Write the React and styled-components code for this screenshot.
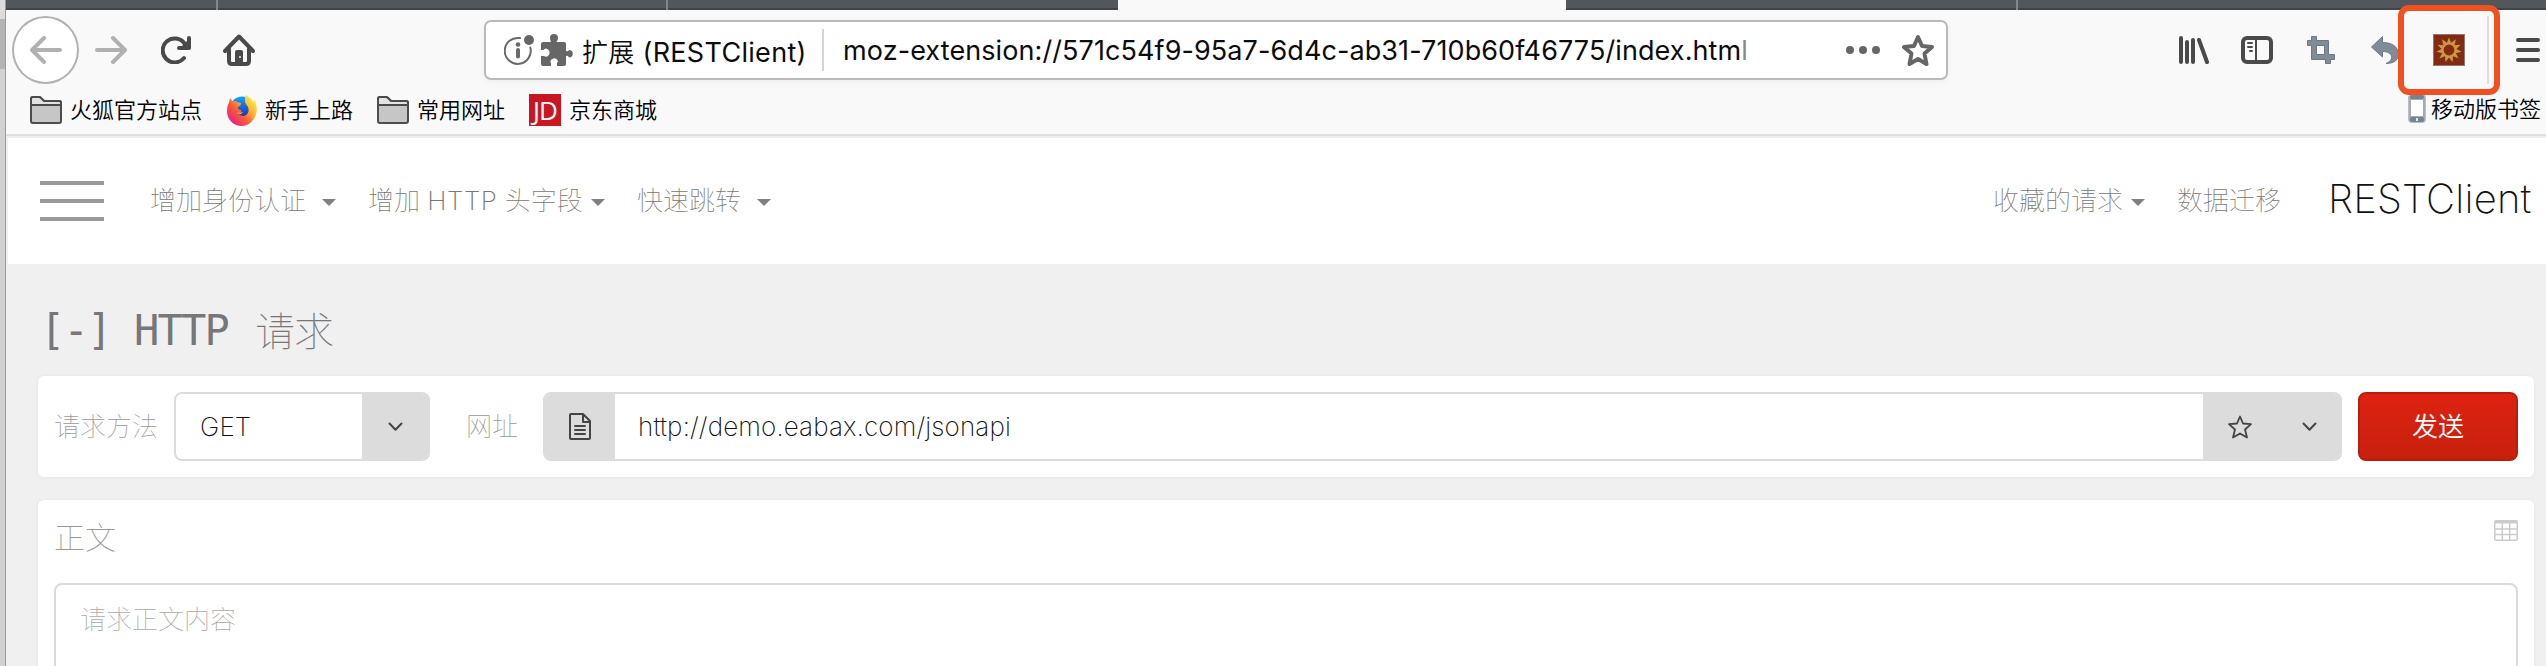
import React from 'react';
import styled, { createGlobalStyle } from 'styled-components';

const Global = createGlobalStyle`
  * { box-sizing: border-box; }
  html, body { margin: 0; padding: 0; }
  body { width: 2546px; height: 666px; overflow: hidden; font-family: Inter, 'Noto Sans CJK SC', sans-serif; background: #f0f0f0; }
  svg { display: block; flex: none; }
`;

const Screen = styled.div`
  display: flex;
  width: 2546px;
  height: 666px;
  overflow: hidden;
`;
const Desktop = styled.div`
  width: 6px;
  flex: none;
  border-right: 1px solid #9a9a9a;
  background: linear-gradient(#dcdcdc 0 19px, #b4b4b4 19px 69px, #d2d2d2 69px 100%);
`;
const Window = styled.div`
  flex: 1;
  min-width: 0;
  height: 666px;
  display: flex;
  flex-direction: column;
`;
const TabStrip = styled.div`
  height: 10px;
  flex: none;
  display: flex;
  background: #f9f9fa;
`;
const Tab = styled.div`
  width: ${(p) => p.$w}px;
  flex: none;
  background: ${(p) => (p.$active ? '#f9f9fa' : 'linear-gradient(#53575b 0 8px, #414549 8px)')};
  border-right: ${(p) => (p.$line ? '2px solid #84878a' : '0')};
`;
const Toolbar = styled.div`
  height: 80px;
  flex: none;
  display: flex;
  align-items: center;
  padding: 0 6px 0 6px;
  background: #f9f9fa;
`;
const BackButton = styled.div`
  width: 68px;
  height: 68px;
  border: 2px solid #b1b1b1;
  border-radius: 50%;
  background: #fff;
  display: flex;
  align-items: center;
  justify-content: center;
`;
const Slot = styled.div`
  margin-left: ${(p) => p.$gap}px;
  flex: none;
`;
const AddressBar = styled.div`
  width: 1464px;
  height: 60px;
  margin-left: 229px;
  flex: none;
  border: 2px solid #bababb;
  border-radius: 7px;
  background: #fff;
  box-shadow: 0 2px 6px rgba(0, 0, 0, 0.05);
  display: flex;
  align-items: center;
  padding: 0 12px 0 18px;
  font-size: 27px;
  color: #0c0c0d;
  white-space: nowrap;
`;
const Identity = styled.span`
  width: 241px;
  margin-left: 8px;
  margin-right: -1px;
  letter-spacing: 0.3px;
  span { font-size: 26px; font-weight: 350; }
`;
const Divider = styled.div`
  width: 2px;
  height: 42px;
  background: #d4d4d4;
`;
const Address = styled.span`
  flex: 1;
  margin-left: 19px;
  letter-spacing: 0.09px;
  i { font-style: normal; color: #888; }
`;
const HighlightFrame = styled.div`
  position: relative;
  width: 102px;
  height: 90px;
  margin: -1px 0 0 -1px;
  flex: none;
  border: 6px solid #f25022;
  border-radius: 11px;
  background: #f9f9fa;
  display: flex;
  align-items: center;
  padding-left: 29px;
`;
const Rule = styled.div`
  width: 2px;
  height: 68px;
  margin-left: 22px;
  background: #dedede;
`;
const Bookmarks = styled.div`
  height: 44px;
  flex: none;
  display: flex;
  align-items: center;
  padding: 0 5px 4px 24px;
  background: #f9f9fa;
  font-size: 22px;
  font-weight: 350;
  line-height: 32px;
  color: #000;
`;
const Bookmark = styled.div`
  display: flex;
  align-items: center;
  gap: ${(p) => p.$gap || 8}px;
  margin-left: ${(p) => p.$ml || 0}px;
  padding-bottom: ${(p) => p.$lift || 0}px;
`;
const Spacer = styled.div`
  flex: 1;
`;
const JdLogo = styled.div`
  width: 32px;
  height: 32px;
  background: #c81623;
  color: #fff;
  font: 26px/32px 'Open Sans', sans-serif;
  letter-spacing: -1px;
  text-align: center;
`;
const Page = styled.div`
  flex: 1;
  min-height: 0;
  overflow: hidden;
  display: flex;
  flex-direction: column;
  border-top: 2px solid #e0e0e1;
  background: #f0f0f0;
`;
const NavBar = styled.div`
  height: 128px;
  flex: none;
  margin-left: 2px;
  border-top: 2px solid #f0f0f0;
  background: #fff;
  display: flex;
  align-items: center;
  padding: 0 14px 0 32px;
  font-size: 26px;
  font-weight: 100;
  color: #777;
  white-space: nowrap;
  line-height: 36px;
`;
const MenuLines = styled.div`
  width: 64px;
  height: 40px;
  display: flex;
  flex-direction: column;
  justify-content: space-between;
  i { height: 4px; background: #999; }
`;
const NavItem = styled.div`
  display: flex;
  align-items: center;
  margin-left: ${(p) => p.$ml}px;
  width: ${(p) => p.$w}px;
  justify-content: space-between;
  b { font-weight: 200; letter-spacing: 0.6px; }
`;
const Caret = styled.i`
  border: 7px solid transparent;
  border-top-color: #808080;
  border-bottom: 0;
  margin-top: 3px;
`;
const Brand = styled.div`
  width: 204px;
  margin-left: 47px;
  font-size: 40px;
  font-weight: 200;
  color: #111;
  letter-spacing: 0.2px;
  padding-bottom: 4px;
`;
const Heading = styled.div`
  height: 112px;
  flex: none;
  display: flex;
  align-items: center;
  padding: 22px 0 0 34px;
  font: 42px/48px 'DejaVu Sans Mono', monospace;
  letter-spacing: -1.8px;
  color: #777;
  white-space: pre;
  span { font: 100 40px/48px 'Noto Sans CJK SC', sans-serif; letter-spacing: -1px; margin-left: 27px; padding-bottom: 4px; }
`;
const Card = styled.div`
  margin: 0 12px 0 32px;
  background: #fff;
  border-radius: 6px 6px ${(p) => (p.$open ? '0 0' : '6px 6px')};
  box-shadow: 0 0 4px rgba(0, 0, 0, 0.05);
`;
const RequestRow = styled(Card)`
  height: 101px;
  flex: none;
  display: flex;
  align-items: center;
  padding: 0 16px;
  margin-bottom: 23px;
  font-size: 26px;
`;
const Label = styled.span`
  width: ${(p) => p.$w}px;
  padding-left: ${(p) => p.$inset || 0}px;
  flex: none;
  font-weight: 100;
  color: #999;
  line-height: 36px;
`;
const Field = styled.div`
  width: ${(p) => p.$w}px;
  height: 69px;
  flex: none;
  border: 2px solid #dcdcdc;
  border-radius: 8px;
  background: #fff;
  display: flex;
  overflow: hidden;
`;
const Addon = styled.div`
  width: ${(p) => p.$w}px;
  flex: none;
  background: #dcdcdc;
  display: flex;
  align-items: center;
  justify-content: ${(p) => (p.$spread ? 'space-between' : 'center')};
  padding: ${(p) => (p.$spread ? '0 23px 0 25px' : '0')};
`;
const Value = styled.div`
  flex: 1;
  padding-left: ${(p) => p.$pl}px;
  line-height: 66px;
  font-size: 26px;
  font-weight: 200;
  color: #111;
  letter-spacing: 0.14px;
`;
const SendButton = styled.button`
  width: 160px;
  height: 69px;
  margin-left: 16px;
  flex: none;
  border: 2px solid #b81d0d;
  border-radius: 8px;
  background: linear-gradient(#dc2310, #c9200e);
  color: #fff;
  font: 350 26px/36px Inter, 'Noto Sans CJK SC', sans-serif;
`;
const BodyCard = styled(Card)`
  flex: 1;
  padding: 16px 16px 0;
`;
const BodyHead = styled.div`
  height: 67px;
  display: flex;
  justify-content: space-between;
  font-size: 31px;
  line-height: 43px;
  font-weight: 100;
  color: #999;
  svg { margin-top: 4px; }
`;
const BodyInput = styled.div`
  height: 120px;
  border: 2px solid #dadada;
  border-radius: 8px;
  padding: 16px 24px;
  font-size: 26px;
  line-height: 37px;
  font-weight: 100;
  color: #aaa;
`;

const Stroke = ({ w, h, color = '#4a4a4a', sw = 4, children }) => (
  <svg width={w} height={h} viewBox={`0 0 ${w} ${h}`} fill="none" stroke={color} strokeWidth={sw} strokeLinecap="round" strokeLinejoin="round">
    {children}
  </svg>
);
const Folder = () => (
  <Stroke w={32} h={28} sw={2} color="#4c4c4c">
    <path d="M1 25V3Q1 1 3 1H9Q10 1 11 2L14 5H29Q31 5 31 7V25Q31 27 29 27H3Q1 27 1 25Z" fill="#c6c6c6" />
    <path d="M1 9V3Q1 1 3 1H9Q10 1 11 2L14 5H29Q31 5 31 7V9Z" fill="#e3e3e3" />
  </Stroke>
);
const Firefox = () => (
  <svg width="30" height="31" viewBox="0 0 30 31">
    <defs>
      <linearGradient id="fx" x1="0.9" y1="0.1" x2="0.15" y2="0.85">
        <stop offset="0" stopColor="#fff04a" />
        <stop offset="0.35" stopColor="#ffb52e" />
        <stop offset="0.65" stopColor="#fb5a36" />
        <stop offset="1" stopColor="#e5277a" />
      </linearGradient>
      <linearGradient id="globe" x1="0.5" y1="0" x2="0.6" y2="1">
        <stop offset="0" stopColor="#12a5f0" />
        <stop offset="0.6" stopColor="#1c52cd" />
        <stop offset="1" stopColor="#2b1a83" />
      </linearGradient>
    </defs>
    <circle cx="15" cy="13.500" r="12" fill="url(#globe)" />
    <path d="M19 0C23 3 25 4 26 7L27.500 5C30 10 30 14 29.500 17C28 25 22 31 15 31C7 31 0 25 0 16C0 12 1 9 2 7.500L3 3L5.500 6.500C8 5.500 9 6.500 10 7L14 8C14 10 13 11 11 12C10 14 12 15 14 15C15 17 13 17 11 18C13 21 17 22 19 20C22 18 22 15 21 12L19 9C17 6 18 3 19 0Z" fill="url(#fx)" />
    <path d="M10 18C12 17 13 18 16 17C15 19 13 20 10 18Z" fill="#ffb23a" />
  </svg>
);
const Chevron = () => (
  <Stroke w={15} h={10} color="#444" sw={2}><path d="M1.500 1.500L7.500 7.800L13.500 1.500" /></Stroke>
);

export default function App() {
  return (
    <Screen>
      <Global />
      <Desktop />
      <Window>
        <TabStrip>
          <Tab $w={212} $line />
          <Tab $w={450} $line />
          <Tab $w={450} />
          <Tab $w={448} $active />
          <Tab $w={452} $line />
          <Tab $w={540} />
        </TabStrip>
        <Toolbar>
          <BackButton>
            <Stroke w={32} h={28} color="#b1b1b1"><path d="M2 14H30M14 2L2 14L14 26" /></Stroke>
          </BackButton>
          <Slot $gap={16}><Stroke w={32} h={28} color="#b1b1b1"><path d="M2 14H30M18 2L30 14L18 26" /></Stroke></Slot>
          <Slot $gap={34}>
            <Stroke w={30} h={28}>
              <path d="M23 22A12 12 0 1 1 23.500 7.500" />
              <path d="M28 2V12H18" />
              <path d="M28 3V12H19Z" fill="#4a4a4a" stroke="none" />
            </Stroke>
          </Slot>
          <Slot $gap={32}>
            <Stroke w={32} h={32}>
              <path d="M2 17L16 2.500L30 17" />
              <path d="M6 15V27Q6 30 9 30H23Q26 30 26 27V15" />
              <path d="M12 30V18Q12 16 14 16H18Q20 16 20 18V30Z" fill="#4a4a4a" stroke="none" />
              <circle cx="17" cy="23" r="1" fill="#f9f9fa" stroke="none" />
            </Stroke>
          </Slot>
          <AddressBar>
            <Stroke w={30} h={30} color="#6a6a6a" sw={2}>
              <path d="M16 3.100A13 13 0 1 0 26.300 12.500" />
              <circle cx="25" cy="5" r="5" fill="#666" stroke="none" />
              <circle cx="14" cy="9.500" r="2.300" fill="#666" stroke="none" />
              <path d="M14 15V21.500" strokeWidth="4" />
            </Stroke>
            <Slot $gap={7}>
              <svg width="33" height="32" viewBox="0 0 33 32" fill="#666">
                <path d="M2 8H10Q9 6 9 4A4 4 0 0 1 17 4Q17 6 15.500 8H23Q25 8 25 10V17Q27 18 28 16A3.500 3.500 0 1 1 28 23.500Q27 21 25 22V30Q25 32 23 32H16V29Q17.500 28 16.500 26A4 4 0 0 0 9.500 27Q9 28 10 29V32H2Q0 32 0 30V22H3Q5 23.500 7 22A4.200 4.200 0 0 0 5 14.500Q3 14.500 2.500 16H0V10Q0 8 2 8Z" />
              </svg>
            </Slot>
            <Identity><span>扩展</span> (RESTClient)</Identity>
            <Divider />
            <Address>moz-extension://571c54f9-95a7-6d4c-ab31-710b60f46775/index.htm<i>l</i></Address>
            <svg width="34" height="8" fill="#666"><circle cx="4" cy="4" r="4" /><circle cx="17" cy="4" r="4" /><circle cx="30" cy="4" r="4" /></svg>
            <Slot $gap={22}>
              <Stroke w={32} h={32} color="#666"><path d="M16 3L20 12L30 13L22.500 19.500L24.500 30L16 25L7.500 30L9.500 19.500L2 13L12 12Z" /></Stroke>
            </Slot>
          </AddressBar>
          <Slot $gap={231}><Stroke w={30} h={28}><path d="M2 2V26M8 6V26M14 4V26M20 4L28 26" /></Stroke></Slot>
          <Slot $gap={32}>
            <Stroke w={32} h={28}>
              <rect x="2" y="2" width="28" height="24" rx="4" />
              <path d="M15 3V26" strokeWidth="2" />
              <path d="M7 7H11M7 11H11M9 15H11" strokeWidth="2" />
            </Stroke>
          </Slot>
          <Slot $gap={34}>
            <svg width="28" height="28" viewBox="0 0 28 28" fill="#818c99" stroke="#6c7886" strokeWidth="1" fillRule="evenodd">
              <path d="M4.500 .5H9.500V4.500H21.500V18.500H27.500V23.500H23.500V27.500H18.500V23.500H4.500V9.500H.5V4.500H4.500ZM9.500 9.500V18.500H17.500V9.500Z" />
            </svg>
          </Slot>
          <Slot $gap={36}>
            <svg width="28" height="28" viewBox="0 0 28 28" fill="#818c99" stroke="#6c7886" strokeWidth="1">
              <path d="M.5 11L11.500 .5V6.500C21 6.500 27.500 11 27.500 18C27.500 24 23 27.500 15 27.500C24 24 22 15.500 11.500 15.500V21Z" />
            </svg>
          </Slot>
          <HighlightFrame>
            <svg width="32" height="32" viewBox="-16 -16 32 32">
              <rect x="-15.500" y="-15.500" width="31" height="31" fill="#802b12" stroke="#8d7a70" />
              {Array.from({ length: 11 }, (_, i) => (
                <path key={i} d="M-2.200 -6.800L0 -12.800L2.200 -6.800Z" fill="#cd9743" transform={`rotate(${(i * 360) / 11})`} />
              ))}
              <circle r="6.500" fill="#802b12" stroke="#cd9743" strokeWidth="2.200" />
            </svg>
            <Rule />
          </HighlightFrame>
          <Slot $gap={16}><Stroke w={24} h={24}><path d="M2 2H22M2 12H22M2 22H22" /></Stroke></Slot>
        </Toolbar>
        <Bookmarks>
          <Bookmark><Folder />火狐官方站点</Bookmark>
          <Bookmark $ml={25}><Firefox />新手上路</Bookmark>
          <Bookmark $ml={24}><Folder />常用网址</Bookmark>
          <Bookmark $ml={24}><JdLogo>JD</JdLogo>京东商城</Bookmark>
          <Spacer />
          <Bookmark $gap={5} $lift={3}>
            <svg width="18" height="29" viewBox="0 0 18 29">
              <rect x=".5" y=".5" width="17" height="28" rx="3" fill="#a4adb6" stroke="#b9bfc5" />
              <rect x="2" y="1" width="14" height="4" rx="2" fill="#77838f" />
              <rect x="3" y="6" width="12" height="16" fill="#fff" />
              <rect x="2" y="23" width="14" height="5" rx="2" fill="#77838f" />
              <rect x="8" y="24" width="2" height="3" fill="#e8e8e8" />
            </svg>
            移动版书签
          </Bookmark>
        </Bookmarks>
        <Page>
          <NavBar>
            <MenuLines><i /><i /><i /></MenuLines>
            <NavItem $ml={46} $w={186}>增加身份认证<Caret /></NavItem>
            <NavItem $ml={32} $w={237}><span>增加 <b>HTTP</b> 头字段</span><Caret /></NavItem>
            <NavItem $ml={32} $w={134}>快速跳转<Caret /></NavItem>
            <Spacer />
            <NavItem $ml={0} $w={152}>收藏的请求<Caret /></NavItem>
            <NavItem $ml={32} $w={104}>数据迁移</NavItem>
            <Brand>RESTClient</Brand>
          </NavBar>
          <Heading>[-] HTTP<span>请求</span></Heading>
          <RequestRow>
            <Label $w={120}>请求方法</Label>
            <Field $w={256}>
              <Value $pl={24}>GET</Value>
              <Addon $w={66}><Chevron /></Addon>
            </Field>
            <Label $w={113} $inset={36}>网址</Label>
            <Field $w={1799}>
              <Addon $w={70}>
                <Stroke w={22} h={27} color="#444" sw={2}>
                  <path d="M1 2Q1 1 2 1H14L21 8V25Q21 26 20 26H2Q1 26 1 25ZM14 1V9H21M6 13H16M6 17H16M6 21H16" />
                </Stroke>
              </Addon>
              <Value $pl={23}>http://demo.eabax.com/jsonapi</Value>
              <Addon $w={137} $spread>
                <Stroke w={24} h={24} color="#444" sw={1.8}><path d="M12 1.500L15 8.500L23 9.200L17 14.500L19 22.500L12 18.500L5 22.500L7 14.500L1 9.200L9 8.500Z" /></Stroke>
                <Chevron />
              </Addon>
            </Field>
            <SendButton>发送</SendButton>
          </RequestRow>
          <BodyCard $open>
            <BodyHead>
              正文
              <svg width="24" height="21" viewBox="0 0 24 21" fill="none" stroke="#ccc" strokeWidth="1.500">
                <rect x=".75" y=".75" width="22.500" height="19.500" rx="1.500" />
                <path d="M1 2H23" strokeWidth="3" />
                <path d="M1 9H23M1 14.500H23M8.300 3V20M15.700 3V20" />
              </svg>
            </BodyHead>
            <BodyInput>请求正文内容</BodyInput>
          </BodyCard>
        </Page>
      </Window>
    </Screen>
  );
}
